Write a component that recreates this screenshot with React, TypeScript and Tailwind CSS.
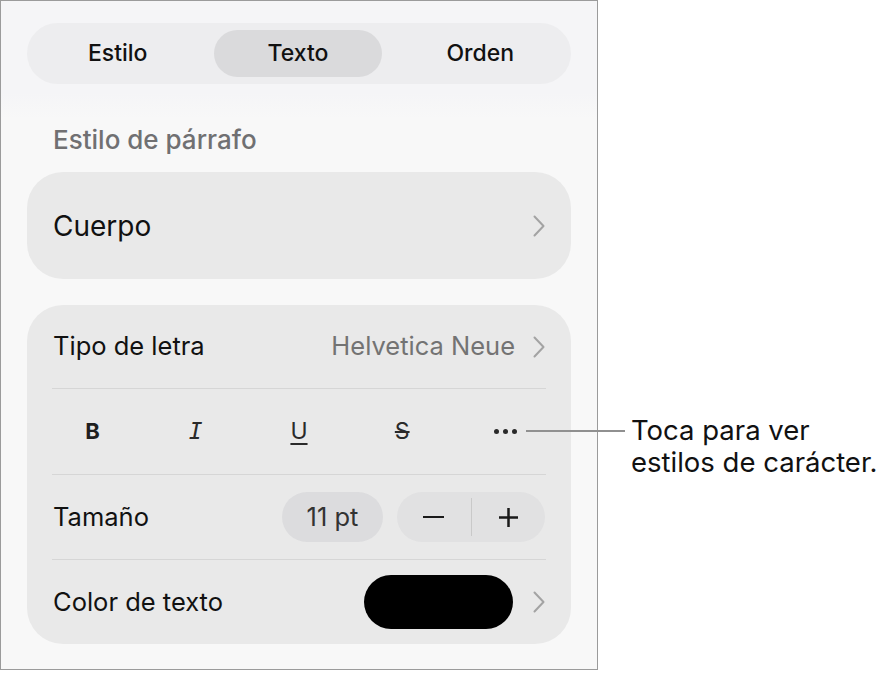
import React from "react";

const Chevron = () => (
  <svg width="12" height="22" viewBox="0 0 12 22" fill="none" className="shrink-0">
    <path d="M1.5 1.5 L10.5 11 L1.5 20.5" stroke="#a3a3a3" strokeWidth="2" strokeLinecap="round" strokeLinejoin="round" />
  </svg>
);

const Divider = () => <div className="h-px bg-[#d6d6d6]" />;

export default function App() {
  return (
    <div
      className="relative w-[891px] h-[673px] bg-white text-[#111]"
      style={{ fontFamily: "Inter, 'Noto Sans', sans-serif" }}
    >
      <div className="w-[598px] h-[670px] border border-[#9b9b9b] bg-[linear-gradient(to_bottom,#f5f5f7_0px,#f5f5f7_92px,#f8f8f8_118px)] flex flex-col px-[26px] pt-[22px]">
        {/* Segmented control */}
        <div className="h-[61px] rounded-full bg-[#ededef] grid grid-cols-3">
          <div className="flex items-center justify-center text-[23px] font-medium">Estilo</div>
          <div className="flex items-stretch py-[7px] pl-[6px] pr-[8px]">
            <div className="flex-1 rounded-full bg-[#dadadc] flex items-center justify-center text-[23px] font-medium">
              Texto
            </div>
          </div>
          <div className="flex items-center justify-center text-[23px] font-medium">Orden</div>
        </div>

        <div className="mt-[41px] pl-[26px] h-[30px] leading-[30px] text-[26px] font-medium text-[#707072]">
          Estilo de párrafo
        </div>

        {/* Cuerpo card */}
        <div className="mt-[17px] h-[107px] rounded-[36px] bg-[#e9e9e9] flex items-center justify-between pl-[26px] pr-[26px]">
          <span className="text-[28px]">Cuerpo</span>
          <Chevron />
        </div>

        {/* Text settings card */}
        <div className="mt-[26px] rounded-[36px] bg-[#e9e9e9] px-[25px] flex flex-col">
          <div className="h-[83px] flex items-center justify-between">
            <span className="text-[25.5px] pl-[1px]">Tipo de letra</span>
            <div className="flex items-center gap-[18px] pr-[1px]">
              <span className="text-[25.5px] text-[#737373]">Helvetica Neue</span>
              <Chevron />
            </div>
          </div>
          <Divider />
          <div className="h-[85px] -mx-[11px] grid grid-cols-5 items-center">
            <div className="flex justify-center">
              <span className="text-[22px] font-bold text-[#1f1f1f]">B</span>
            </div>
            <div className="flex justify-center">
              <span
                className="text-[23px] italic text-[#2a2a2a]"
                style={{ fontFamily: "'DejaVu Sans Mono', monospace" }}
              >
                I
              </span>
            </div>
            <div className="flex justify-center">
              <span className="text-[23px] underline underline-offset-[4px] decoration-[1.5px] text-[#2a2a2a]">U</span>
            </div>
            <div className="flex justify-center">
              <span className="text-[23px] line-through decoration-[1.5px] text-[#2a2a2a]">S</span>
            </div>
            <div className="flex justify-center">
              <div className="flex items-center gap-[4px]">
                <span className="w-[5px] h-[5px] rounded-full bg-[#2a2a2a]" />
                <span className="w-[5px] h-[5px] rounded-full bg-[#2a2a2a]" />
                <span className="w-[5px] h-[5px] rounded-full bg-[#2a2a2a]" />
              </div>
            </div>
          </div>
          <Divider />
          <div className="h-[84px] flex items-center justify-between">
            <span className="text-[25.5px] pl-[1px]">Tamaño</span>
            <div className="flex items-center gap-[14px] pr-[1px]">
              <div className="w-[101px] h-[50px] rounded-full bg-[#dcdcde] flex items-center justify-center text-[25.5px] text-[#333]">
                11 pt
              </div>
              <div className="w-[148px] h-[50px] rounded-full bg-[#e1e1e2] flex items-center">
                <div className="flex-1 flex items-center justify-center">
                  <div className="w-[21px] h-[2.5px] bg-[#1a1a1a]" />
                </div>
                <div className="w-px h-[38px] bg-[#c9c9c9]" />
                <div className="flex-1 flex items-center justify-center">
                  <svg width="21" height="21" viewBox="0 0 21 21">
                    <path d="M10.5 1 V20 M1 10.5 H20" stroke="#1a1a1a" strokeWidth="2.5" />
                  </svg>
                </div>
              </div>
            </div>
          </div>
          <Divider />
          <div className="h-[84px] flex items-center justify-between">
            <span className="text-[25.5px] pl-[1px]">Color de texto</span>
            <div className="flex items-center gap-[20px] pr-[1px]">
              <div className="w-[149px] h-[54px] rounded-full bg-black" />
              <Chevron />
            </div>
          </div>
        </div>
      </div>

      {/* Callout */}
      <div className="absolute left-[526px] top-[430px] w-[99px] h-[2px] bg-[#909090]" />
      <div className="absolute left-[631px] top-[414px] text-[27.5px] leading-[32px] text-[#111] whitespace-nowrap">
        Toca para ver
        <br />
        estilos de carácter.
      </div>
    </div>
  );
}
